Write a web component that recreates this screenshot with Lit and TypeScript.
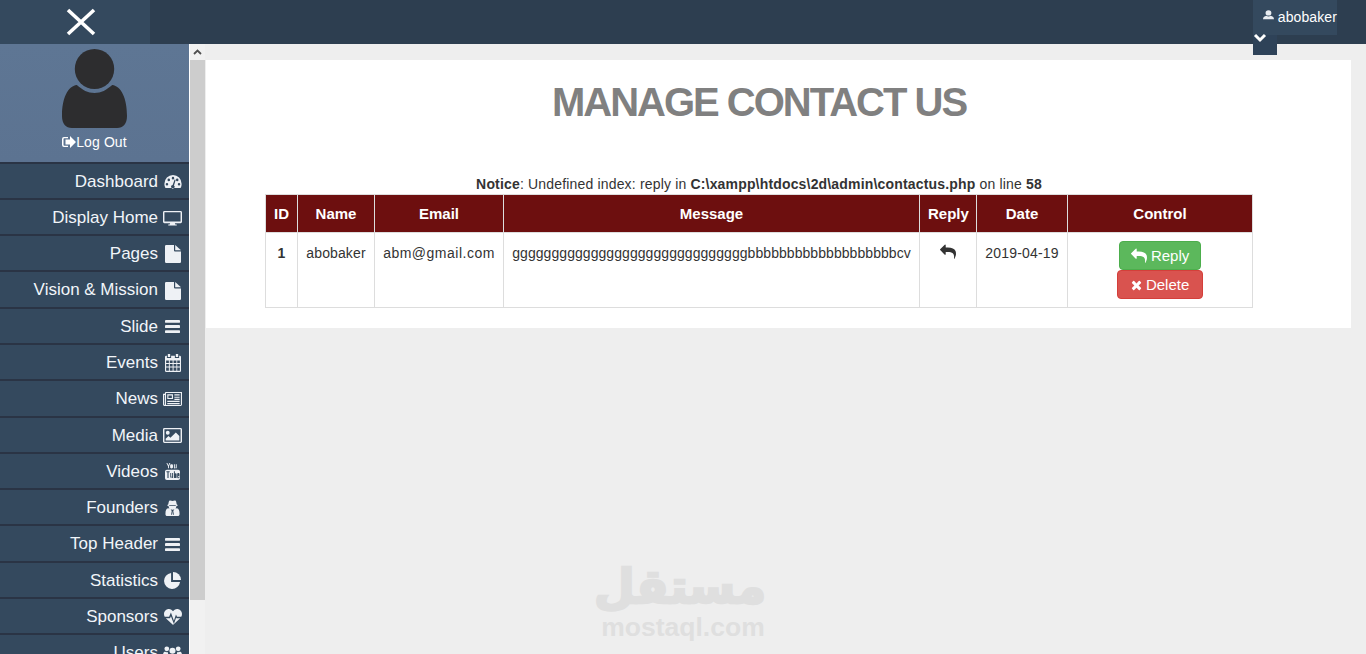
import { LitElement, html, css, svg } from "lit";
import { customElement } from "lit/decorators.js";

const ic = (vb: string, body: unknown, cls = "ic") =>
  html`<svg class=${cls} viewBox=${vb} fill="currentColor" preserveAspectRatio="none" aria-hidden="true">${body}</svg>`;

const REPLY = svg`<path d="M1792 1120q0 166-127 451-3 7-10.5 24t-13.5 30-13 22q-12 17-28 17-15 0-23.5-10t-8.5-25q0-9 2.5-26.5t2.5-23.5q5-68 5-123 0-101-17.5-181t-48.5-138.5-80-101-105.5-69.5-133-42.5-154-21.5-175.5-6h-224v256q0 26-19 45t-45 19-45-19l-512-512q-19-19-19-45t19-45l512-512q19-19 45-19t45 19 19 45v256h224q713 0 875 403 53 134 53 333z"/>`;
const TIMES = svg`<path d="M1298 1322q0 40-28 68l-136 136q-28 28-68 28t-68-28l-294-294-294 294q-28 28-68 28t-68-28l-136-136q-28-28-28-68t28-68l294-294-294-294q-28-28-28-68t28-68l136-136q28-28 68-28t68 28l294 294 294-294q28-28 68-28t68 28l136 136q28 28 28 68t-28 68l-294 294 294 294q28 28 28 68z"/>`;

const dash = ic("0 0 20 16", svg`<path fill-rule="evenodd" d="M10 1a9.6 9.6 0 0 1 9.6 9.6c0 1.700-.4 3.200-1.200 4.400H1.600A9.300 9.300 0 0 1 .4 10.600 9.600 9.600 0 0 1 10 1zM10 3a1.400 1.400 0 1 0 0 2.800A1.400 1.400 0 0 0 10 3zM5.300 4.900a1.400 1.400 0 1 0 0 2.800 1.400 1.400 0 0 0 0-2.800zM14.700 4.900a1.400 1.400 0 1 0 0 2.800 1.400 1.400 0 0 0 0-2.800zM3.300 9.500a1.400 1.400 0 1 0 0 2.800 1.400 1.400 0 0 0 0-2.800zM16.700 9.500a1.400 1.400 0 1 0 0 2.800 1.400 1.400 0 0 0 0-2.800zM13 6.200l-1.200-.4-2.200 5.900a1.900 1.900 0 1 0 1.500.5z"/>`, "ic dash");
const desktop = ic("0 0 20 16", svg`<path fill-rule="evenodd" d="M1.500 0h17A1.500 1.500 0 0 1 20 1.500v10a1.500 1.500 0 0 1-1.500 1.500H12.500l.5 1.500h1.500v1h-9v-1H7l.5-1.500h-6A1.500 1.500 0 0 1 0 11.500v-10A1.500 1.500 0 0 1 1.500 0zM1.500 1.300v10h17v-10z"/>`, "ic desk");
const file = ic("0 0 16 18", svg`<path d="M1.200 0H9v5.500a1 1 0 0 0 1 1h6v10.300a1.200 1.200 0 0 1-1.200 1.200H1.200A1.200 1.200 0 0 1 0 16.800V1.200A1.200 1.200 0 0 1 1.200 0z"/><path d="M10.200 0L16 5.300H10.200z"/>`, "ic file");
const bars = ic("0 0 16 14", svg`<rect y="0" width="16" height="3" rx=".5"/><rect y="5.500" width="16" height="3" rx=".5"/><rect y="11" width="16" height="3" rx=".5"/>`, "ic bars");
const cal = ic("0 0 17 18", svg`<path fill-rule="evenodd" d="M3 0h2.500v3H3zM11.500 0H14v3h-2.500zM1.300 1.800H2V4h4.500V1.800h4V4H15V1.800h.7A1.300 1.300 0 0 1 17 3.100v13.600A1.300 1.300 0 0 1 15.700 18H1.300A1.300 1.300 0 0 1 0 16.700V3.100A1.300 1.300 0 0 1 1.300 1.800zM1.200 6.500v2.400h2.900V6.500zM5.100 6.500v2.400h3V6.500zM9.100 6.500v2.400h3V6.500zM13 6.500v2.400h2.800V6.500zM1.200 9.900v2.500h2.900V9.900zM5.100 9.900v2.500h3V9.900zM9.100 9.900v2.500h3V9.900zM13 9.900v2.500h2.800V9.900zM1.200 13.400v3.300h2.900v-3.300zM5.100 13.400v3.300h3v-3.300zM9.100 13.400v3.300h3v-3.300zM13 13.400v3.300h2.800v-3.300z"/>`, "ic cal");
const news = ic("0 0 20 15", svg`<path fill-rule="evenodd" d="M3 0h17v13.500a1.500 1.500 0 0 1-1.500 1.500H1.500A1.500 1.500 0 0 1 0 13.500V2h2V1a1 1 0 0 1 1-1zM1.200 3.200v10.100a.4.4 0 0 0 .8 0V3.200zM3.200 1.200v12.600h15.600V1.200zM4.500 2.500h6v5h-6zM5.700 3.700v2.600h3.600V3.700zM12 2.500h5.500v1.200H12zM12 5h5.500v1.200H12zM12 7.300h5.500v1.200H12zM4.500 9.500h13v1.200h-13zM4.500 11.800h13V13h-13z"/>`, "ic news");
const pic = ic("0 0 20 16", svg`<path fill-rule="evenodd" d="M1.500 0h17A1.500 1.500 0 0 1 20 1.500v13a1.500 1.500 0 0 1-1.500 1.500h-17A1.500 1.500 0 0 1 0 14.500v-13A1.500 1.500 0 0 1 1.500 0zM1.500 1.300v13.400h17V1.300zM5 3a2 2 0 1 1 0 4.100A2 2 0 0 1 5 3zM2.800 13.400v-2l3-3 2 2 5.700-5.700 3.700 3.700v5z"/>`, "ic desk");
const yt = ic("0 0 16 19", svg`<path fill-rule="evenodd" d="M2.500 0l1.100 2.600L4.700 0h1L4.200 3.500V6h-1V3.500L1.500 0zM7 1.500c1 0 1.500.5 1.500 1.300v2c0 .8-.5 1.300-1.500 1.300s-1.500-.5-1.500-1.300v-2c0-.8.5-1.300 1.500-1.300zM9.500 1.500h1v3.600c0 .4.500.3 1 0V1.500h1V6h-1v-.4c-.9.700-2 .8-2-.3zM2 7.500h12A2 2 0 0 1 16 9.500v7.500a2 2 0 0 1-2 2H2a2 2 0 0 1-2-2V9.500a2 2 0 0 1 2-2zM1.500 9.200v1.100h1.100v6.500h1.200v-6.500h1.100V9.200zM5.600 11.200v4.500c0 1.100 1 1 2 .3v.8h1v-5.600h-1v4c-.5.300-1 .4-1 0v-4zM9.500 9.200v7.600h1v-.4c.9.700 1.900.5 1.900-.6v-3.200c0-1.100-1-1.300-1.900-.6V9.200zM13 12v3.600c0 1 .6 1.400 1.300 1.400s1.200-.5 1.200-1.300v-.5h-1v.5c0 .5-.6.5-.6 0V14.500h1.600V12.400c0-.8-.5-1.300-1.200-1.300s-1.300.5-1.300.9z"/>`, "ic yt");
const secret = ic("0 0 16 18", svg`<path fill-rule="evenodd" d="M5 .5C6 .2 7 1 8 1s2-.8 3-.5c1 .3 1.200 3 1.600 4.700l1.400.8-1.700.8c-.2 1.200-.5 2-1 2.700l1.500-.2c1.700.5 2.700 2.500 2.700 5.500V16c0 1-.7 2-2 2H2.500C1.200 18 .5 17 .5 16v-1.200c0-3 1-5 2.700-5.500l1.500.2c-.5-.7-.8-1.500-1-2.700L2 6l1.400-.8C3.800 3.500 4 .8 5 .5zM6 10.500L7.200 12.500 6.500 16.500H7.500l.5-4 .5 4h1l-.7-4 1.200-2-1.500.5H7.500zM4.500 5.800v1h7v-1z"/>`, "ic sec");
const pie = ic("0 0 18 18", svg`<path d="M7.500 1v9.500H17A8.500 8.500 0 1 1 7.500 1z"/><path d="M9.500 0A8.500 8.500 0 0 1 18 8.500H9.500z"/>`, "ic pie");
const heart = ic("0 0 20 17", svg`<path d="M5.500 0C7.500 0 9 1 10 2.500 11 1 12.500 0 14.500 0 17.500 0 20 2.300 20 5.300c0 1.200-.3 2.200-.8 3H14.500l-1.200-2.400L11 12.500 7.700 3.800 5.700 8.300H.8C.3 7.500 0 6.500 0 5.300 0 2.300 2.500 0 5.500 0z"/><path d="M2 9.800h4.700l1-2.200L11 16l2.500-7 .3.800h4.200L10.500 16.600a.7.7 0 0 1-1 0z"/>`, "ic heart");
const users = ic("0 0 20 16", svg`<circle cx="4" cy="3" r="2.500"/><circle cx="16" cy="3" r="2.500"/><circle cx="10" cy="5" r="3.200"/><path d="M0 10c0-3 1-4 2.200-4 .8.500 2 .8 3 .3-.2 1.400.3 2.500 1 3.300-1.300.3-2.200 1-2.800 2.400H1c-.6 0-1-.5-1-2zM20 10c0-3-1-4-2.200-4-.8.500-2 .8-3 .3.200 1.400-.3 2.500-1 3.300 1.300.3 2.200 1 2.800 2.400H19c.6 0 1-.5 1-2zM6.500 9.300c1 1.200 5.500 1.200 7 0 1.500 0 2.500 1.500 2.500 4 0 1.500-.8 2.700-2 2.700H6c-1.200 0-2-1.200-2-2.700 0-2.500 1-4 2.500-4z"/>`, "ic desk");

const MENU: [string, unknown][] = [
  ["Dashboard", dash], ["Display Home", desktop], ["Pages", file], ["Vision & Mission", file],
  ["Slide", bars], ["Events", cal], ["News", news], ["Media", pic], ["Videos", yt],
  ["Founders", secret], ["Top Header", bars], ["Statistics", pie], ["Sponsors", heart], ["Users", users],
];

@customElement("app-root")
export class AppRoot extends LitElement {
  static styles = css`
    :host { display: flex; flex-direction: column; width: 1366px; height: 654px; overflow: hidden; position: relative; background: #eee; font-family: "Liberation Sans", Arial, sans-serif; color: #333; font-size: 14px; }
    .top { flex: 0 0 44px; display: flex; background: #2d3e50; color: #fff; justify-content: space-between; }
    .toggle { width: 150px; background: #34495e; display: flex; align-items: center; justify-content: center; padding-left: 11px; box-sizing: border-box; }
    .toggle svg { width: 32px; height: 28px; display: block; }
    .user { width: 84px; margin-right: 29px; height: 35px; background: #34495e; position: relative; display: flex; align-items: center; justify-content: flex-end; font-size: 14px; white-space: nowrap; }
    .user .name { position: relative; top: -1px; letter-spacing: .1px; }
    .user .uic { width: 11px; height: 10px; margin-right: 4px; position: relative; top: -3px; }
    .chev { position: absolute; left: 0; top: 35px; width: 24px; height: 20px; background: #2e4258; display: flex; justify-content: flex-start; }
    .chev svg { width: 14px; height: 10px; margin-top: -2px; }
    .body { flex: 1; display: flex; min-height: 0; }
    .side { width: 189px; flex: none; background: #34495e; border-right: 1px solid #fff; overflow: hidden; }
    .profile { height: 117.65px; background: linear-gradient(180deg, #5e7694 0%, #5c7391 100%); display: flex; flex-direction: column; align-items: center; box-sizing: border-box; padding-top: 5px; color: #fff; }
    .profile svg.av { width: 65px; height: 79px; display: block; }
    .logout { display: flex; align-items: center; font-size: 14px; margin-top: 4px; line-height: 20px; letter-spacing: .1px; }
    .logout svg { width: 14px; height: 12px; }
    .item { height: 36.27px; box-sizing: border-box; border-top: 2px solid #2a3445; display: flex; justify-content: flex-end; align-items: center; padding: 2px 7px 0 0; color: #f1f5f9; font-size: 17px; white-space: nowrap; }
    .item .t { line-height: 20px; align-self: flex-start; margin-top: 6px; }
    .item .box { width: 19px; display: flex; justify-content: center; margin-left: 5px; }
    .ic { display: block; color: #eef1f5; }
    .dash { width: 18px; height: 15px; }
    .desk { width: 19px; height: 15px; }
    .file { width: 16px; height: 18px; }
    .bars { width: 15px; height: 13px; }
    .cal { width: 16px; height: 18px; }
    .news { width: 20px; height: 14px; }
    .yt { width: 15px; height: 17px; }
    .sec { width: 15px; height: 16px; }
    .pie { width: 17px; height: 17px; }
    .heart { width: 18px; height: 16px; }
    .sb { width: 15px; flex: none; background: #f1f1f1; display: flex; flex-direction: column; }
    .sb .up { height: 16px; background: #f1f1f1; display: flex; align-items: center; justify-content: center; color: #505050; }
    .sb .up svg { width: 9px; height: 6px; }
    .sb .thumb { height: 540px; background: #cdcdcd; }
    .main { flex: 1; min-width: 0; padding: 16px 15px 0 1px; }
    .panel { background: #fff; height: 268px; box-sizing: border-box; display: flex; flex-direction: column; align-items: center; padding-right: 39px; }
    h1 { margin: 20px 0 0; font-size: 40px; line-height: 44px; font-weight: 700; color: #808080; letter-spacing: -2px; }
    .notice { margin-top: 50px; height: 20px; line-height: 20px; font-size: 14px; color: #333; letter-spacing: .17px; }
    table { border-collapse: collapse; font-size: 14px; table-layout: fixed; width: 988px; }
    th, td { border: 1px solid #ddd; line-height: 20px; text-align: center; vertical-align: top; }
    th { background: #6d0f0f; color: #fff; font-weight: 700; font-size: 15px; padding: 9px 8px 8px; height: 20px; }
    td { padding: 10px 8px 8px; height: 56px; }
    td.id { font-weight: 700; }
    td.nm { letter-spacing: .12px; }
    td.em { letter-spacing: .5px; padding-left: 0; padding-right: 0; }
    td.ms { letter-spacing: .06px; padding-left: 0; padding-right: 0; }
    td.dt { letter-spacing: .2px; }
    td.ct { padding: 8px; height: 58px; }
    .rp { width: 16px; height: 16px; color: #333; vertical-align: -2px; }
    .btn { display: block; margin: 0 auto; box-sizing: border-box; height: 29px; border-radius: 4px; color: #fff; font-size: 15px; line-height: 28px; border: 1px solid; }
    .btn svg { width: 11px; height: 14px; vertical-align: -2px; }
    .g { width: 82px; background: #5cb85c; border-color: #4cae4c; }
    .g svg { width: 16px; height: 16px; vertical-align: -3px; }
    .r { width: 86px; background: #d9534f; border-color: #d43f3a; }
    .mark { position: absolute; left: 600px; top: 561px; width: 166px; color: #dfdfdf; text-align: center; font-weight: 700; pointer-events: none; }
    .mark .ar { font-family: "DejaVu Sans", sans-serif; font-size: 47px; line-height: 52px; height: 52px; white-space: nowrap; -webkit-text-stroke: 2.5px #dfdfdf; }
    .mark .en { font-size: 26.500px; line-height: 28px; }
  `;

  render() {
    const W = [32, 77, 129, 416, 57, 91, 185];
    return html`
      <header class="top">
        <div class="toggle"><svg viewBox="0 0 32 28"><path d="M3 2L29 26M29 2L3 26" stroke="#fff" stroke-width="3.600" fill="none"/></svg></div>
        <div class="user">
          <svg class="uic" viewBox="0 0 12 12" fill="#e8ecf0" preserveAspectRatio="none"><circle cx="6" cy="3.500" r="3.200"/><path d="M0 11c0-2.500 2-3.500 3.500-4 1.500 1 3.500 1 5 0 1.500.5 3.500 1.500 3.500 4z"/></svg>
          <span class="name">abobaker</span>
          <div class="chev"><svg viewBox="0 0 14 10"><path d="M2 2l5 5 5-5" stroke="#fff" stroke-width="3" fill="none"/></svg></div>
        </div>
      </header>
      <div class="body">
        <nav class="side">
          <div class="profile">
            <svg class="av" viewBox="0 0 66 79" fill="#2d2d2f" preserveAspectRatio="none"><circle cx="33" cy="20" r="20"/><path d="M15 36c6 5 11 8 18 8s12-3 18-8c9 1 15 13 15 31 0 8-4 12-10 12H10C4 79 0 75 0 67 0 49 6 37 15 36z"/></svg>
            <div class="logout">
              <svg viewBox="0 0 14 12" fill="#fff"><path fill-rule="evenodd" d="M2 1h4v1.300H2.300a.8.8 0 0 0-.8.8v5.800c0 .4.400.8.800.8H6V11H2a2 2 0 0 1-2-2V3a2 2 0 0 1 2-2z"/><path d="M8 0l6 6-6 6V8.500H3.500v-5H8z"/></svg>
              <span>Log Out</span>
            </div>
          </div>
          ${MENU.map(([t, i]) => html`<div class="item"><span class="t">${t}</span><span class="box">${i}</span></div>`)}
        </nav>
        <div class="sb">
          <div class="up"><svg viewBox="0 0 9 6"><path d="M1 5l3.500-3.500L8 5" stroke="currentColor" stroke-width="1.800" fill="none"/></svg></div>
          <div class="thumb"></div>
        </div>
        <main class="main">
          <section class="panel">
            <h1>MANAGE CONTACT US</h1>
            <div class="notice"><b>Notice</b>: Undefined index: reply in <b>C:\\xampp\\htdocs\\2d\\admin\\contactus.php</b> on line <b>58</b></div>
            <table>
              <colgroup>${W.map((w) => html`<col style="width:${w}px" />`)}</colgroup>
              <thead><tr><th>ID</th><th>Name</th><th>Email</th><th>Message</th><th>Reply</th><th>Date</th><th>Control</th></tr></thead>
              <tbody><tr>
                <td class="id">1</td><td class="nm">abobaker</td><td class="em">abm@gmail.com</td>
                <td class="ms">ggggggggggggggggggggggggggggggbbbbbbbbbbbbbbbbbbbcv</td>
                <td>${ic("0 0 1792 1792", REPLY, "rp")}</td>
                <td class="dt">2019-04-19</td>
                <td class="ct"><div class="btn g">${ic("0 0 1792 1792", REPLY, "")} Reply</div><div class="btn r">${ic("0 0 1408 1792", TIMES, "")} Delete</div></td>
              </tr></tbody>
            </table>
          </section>
        </main>
      </div>
      <div class="mark"><div class="ar" dir="rtl">مستقل</div><div class="en">mostaql.com</div></div>
    `;
  }
}
